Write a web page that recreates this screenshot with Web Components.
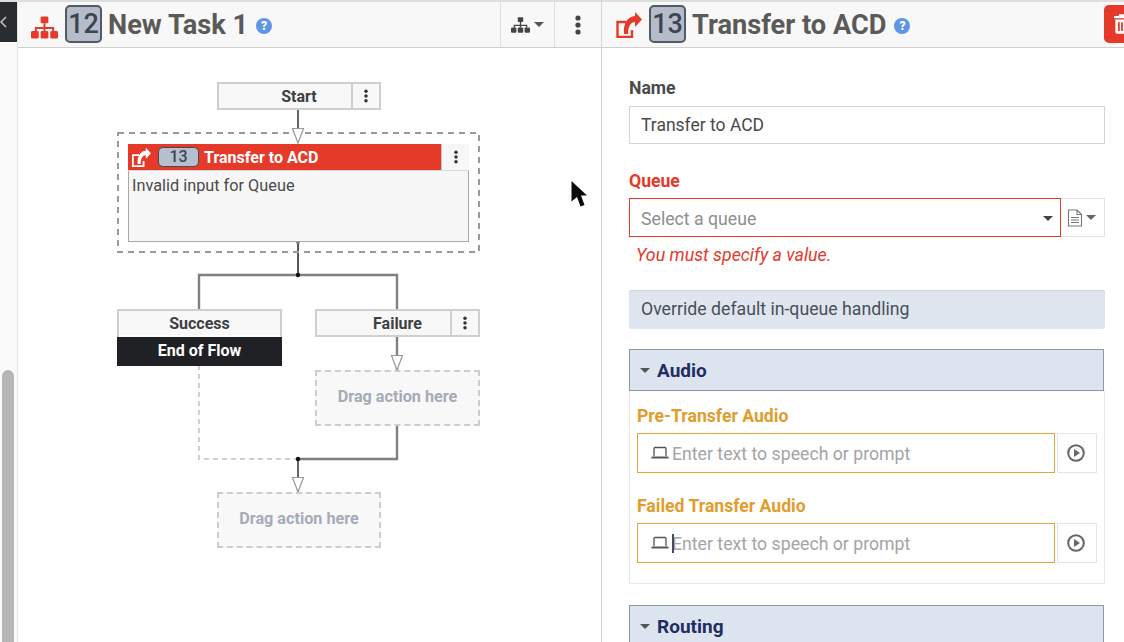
<!DOCTYPE html>
<html>
<head>
<meta charset="utf-8">
<title>Task editor</title>
<style>
    html, body { margin: 0; height: 100%; overflow: hidden; background: #fff; }
    body { font-family: Roboto, "Liberation Sans", sans-serif; }
</style>
</head>
<body>

<editor-shell>
    <side-rail slot="rail"></side-rail>

    <task-panel slot="flow" class="flow">
        <task-header number="12" label="New Task 1" icon="tree" actions></task-header>
        <flow-canvas></flow-canvas>
    </task-panel>

    <task-panel slot="props">
        <task-header number="13" label="Transfer to ACD" icon="share" trash></task-header>
        <props-form></props-form>
    </task-panel>
</editor-shell>
<mouse-pointer></mouse-pointer>

<script>
const ICONS = {
    tree: `<rect x="10" y="0" width="8" height="7" rx="1"/><path d="M13 7h2v4h9v4h-2v-2h-7v2h-2v-2H6v2H4v-4h9z"/><rect x="0" y="15" width="8" height="8" rx="1.5"/><rect x="10" y="15" width="8" height="8" rx="1.5"/><rect x="20" y="15" width="8" height="8" rx="1.5"/>`,
    share: `<path d="M11 11H2.500v15H17v-7" fill="none" stroke="currentColor" stroke-width="2.400"/><path d="M9 23C8 12 13 5.500 20 5V1l7 7.500L20 16v-5c-4 0-7 4-7 12z"/>`,
    kebab: `<circle cx="3" cy="3" r="2.600"/><circle cx="3" cy="10" r="2.600"/><circle cx="3" cy="17" r="2.600"/>`
};

function icon(name, w, h, box) {
    return `<svg width="${w}" height="${h}" viewBox="${box}" fill="currentColor" aria-hidden="true">${ICONS[name]}</svg>`;
}

class EditorShell extends HTMLElement {
    constructor() {
        super();
        this.attachShadow({ mode: 'open' });
    }

    connectedCallback() {
        this.shadowRoot.innerHTML = `
            <style>
                :host {
                    display: grid;
                    grid-template-columns: 17px 585px 522px;
                    height: 642px;
                    overflow: hidden;
                    color: #444;
                }
            </style>
            <slot name="rail"></slot>
            <slot name="flow"></slot>
            <slot name="props"></slot>
        `;
    }
}

class SideRail extends HTMLElement {
    constructor() {
        super();
        this.attachShadow({ mode: 'open' });
    }

    connectedCallback() {
        this.shadowRoot.innerHTML = `
            <style>
                :host {
                    display: flex;
                    flex-direction: column;
                    justify-content: space-between;
                    background: #fafafa;
                    border-top: 2px solid #dedede;
                    box-sizing: border-box;
                    height: 642px;
                }

                .back {
                    height: 40px;
                    background: #2a2d30;
                    color: #c4c6c8;
                    display: flex;
                    align-items: center;
                }

                .thumb {
                    width: 12px;
                    height: 272px;
                    margin-left: 2px;
                    background: #b6b6b6;
                    border-radius: 6px 6px 0 0;
                }
            </style>
            <div class="back">
                <svg width="8" height="14" viewBox="0 0 8 14" fill="none" stroke="currentColor" stroke-width="1.500"><path d="M6 2 1 7l5 5"/></svg>
            </div>
            <div class="thumb"></div>
        `;
    }
}

class TaskPanel extends HTMLElement {
    constructor() {
        super();
        this.attachShadow({ mode: 'open' });
    }

    connectedCallback() {
        this.shadowRoot.innerHTML = `
            <style>
                :host {
                    display: flex;
                    flex-direction: column;
                    height: 642px;
                    min-width: 0;
                    overflow: hidden;
                    box-sizing: border-box;
                }

                :host(.flow) {
                    border-left: 1px solid #e4e4e4;
                    border-right: 1px solid #d6d6d6;
                }
            </style>
            <slot></slot>
        `;
    }
}

class TaskHeader extends HTMLElement {
    constructor() {
        super();
        this.attachShadow({ mode: 'open' });
    }

    connectedCallback() {
        const isTree = this.getAttribute('icon') === 'tree';
        const main = isTree ? icon('tree', 27, 23, '0 0 28 23') : icon('share', 27, 27, '0 0 27 27');
        this.shadowRoot.innerHTML = `
            <style>
                :host {
                    display: flex;
                    align-items: stretch;
                    flex: none;
                    height: 48px;
                    box-sizing: border-box;
                    background: #f8f8f8;
                    border-top: 2px solid #dedede;
                    border-bottom: 1px solid #cfcfcf;
                }

                .title {
                    display: flex;
                    align-items: center;
                    flex: 1;
                    padding-left: 13px;
                    min-width: 0;
                }

                .main {
                    display: flex;
                    color: #e5392a;
                    margin-right: 7px;
                }

                .main.tree {
                    margin-top: 5px;
                }

                .badge {
                    box-sizing: border-box;
                    width: 37px;
                    height: 38px;
                    margin-top: -2px;
                    margin-right: 6px;
                    background: #b6bdca;
                    border: 2px solid #555a60;
                    border-radius: 5px;
                    color: #3c4552;
                    font-size: 27px;
                    font-weight: 500;
                    line-height: 34px;
                    text-align: center;
                }

                .label {
                    font-size: 27.200px;
                    font-weight: 700;
                    color: #5a5a58;
                    white-space: nowrap;
                }

                .help {
                    width: 16px;
                    height: 16px;
                    margin-left: 8px;
                    margin-top: 2px;
                    border-radius: 50%;
                    background: #5f95e6;
                    color: #fff;
                    font-size: 12px;
                    font-weight: 900;
                    line-height: 16px;
                    text-align: center;
                }

                .cell {
                    box-sizing: border-box;
                    display: flex;
                    align-items: center;
                    justify-content: center;
                    gap: 4px;
                    width: 54px;
                    border-left: 1px solid #dedede;
                    color: #444;
                }

                .cell.kebab {
                    width: 47px;
                }

                .caret {
                    width: 0;
                    height: 0;
                    border: 5px solid transparent;
                    border-top-color: #555;
                    border-bottom: 0;
                }

                .trash {
                    box-sizing: border-box;
                    flex: none;
                    width: 40px;
                    height: 38px;
                    margin: 3px -20px 0 0;
                    background: #e5392a;
                    border-radius: 5px;
                    color: #fff;
                    padding: 9px 0 0 10px;
                }
            </style>
            <div class="title">
                <span class="main ${isTree ? 'tree' : ''}">${main}</span>
                <span class="badge">${this.getAttribute('number')}</span>
                <span class="label">${this.getAttribute('label')}</span>
                <span class="help">?</span>
            </div>
            ${this.hasAttribute('actions') ? `
                <div class="cell">
                    ${icon('tree', 19, 16, '0 0 28 23')}
                    <span class="caret"></span>
                </div>
                <div class="cell kebab">${icon('kebab', 6, 20, '0 0 6 20')}</div>
            ` : ''}
            ${this.hasAttribute('trash') ? `
                <div class="trash">
                    <svg width="16" height="20" viewBox="0 0 18 22" fill="currentColor"><path d="M6 0h6l1 2h5v2.500H0V2h5zM1.500 6h15v14a2 2 0 0 1-2 2h-11a2 2 0 0 1-2-2zm3 3v10h2V9zm3.500 0v10h2V9zm3.500 0v10h2V9z"/></svg>
                </div>
            ` : ''}
        `;
    }
}

// nodes of the diagram sit at their own place on the canvas
class FlowNode extends HTMLElement {
    constructor() {
        super();
        this.attachShadow({ mode: 'open' });
    }

    connectedCallback() {
        const hasMenu = this.hasAttribute('menu');
        this.shadowRoot.innerHTML = `
            <style>
                :host {
                    position: absolute;
                    display: block;
                    box-sizing: border-box;
                    width: 165px;
                    background: #fff;
                    border: 2px solid #cfcfcf;
                    color: #3d3f43;
                    font-size: 16px;
                    font-weight: 700;
                }

                .row {
                    position: relative;
                    height: 24px;
                    background: #f8f8f8;
                }

                .name {
                    text-align: center;
                    line-height: 25px;
                }

                .menu {
                    position: absolute;
                    right: 0;
                    top: 0;
                    bottom: 0;
                    width: 26px;
                    border-left: 2px solid #cfcfcf;
                    display: flex;
                    align-items: center;
                    justify-content: center;
                    color: #333;
                }

                .end {
                    margin: 2px -2px -2px;
                    height: 29px;
                    background: #202124;
                    color: #fff;
                    text-align: center;
                    line-height: 27px;
                }
            </style>
            <div class="row">
                <div class="name">${this.getAttribute('label')}</div>
                ${hasMenu ? `<div class="menu">${icon('kebab', 4, 14, '0 0 6 20')}</div>` : ''}
            </div>
            ${this.hasAttribute('end') ? `<div class="end">${this.getAttribute('end')}</div>` : ''}
        `;
    }
}

class DropZone extends HTMLElement {
    constructor() {
        super();
        this.attachShadow({ mode: 'open' });
    }

    connectedCallback() {
        this.shadowRoot.innerHTML = `
            <style>
                :host {
                    position: absolute;
                    display: flex;
                    align-items: center;
                    justify-content: center;
                    box-sizing: border-box;
                    width: 165px;
                    height: 56px;
                    padding-bottom: 3px;
                    background: #f8f8f8;
                    border: 2px dashed #cdcdcd;
                    color: #a5abb7;
                    font-size: 16.200px;
                    font-weight: 700;
                }
            </style>
            <slot></slot>
        `;
    }
}

class ActionNode extends HTMLElement {
    constructor() {
        super();
        this.attachShadow({ mode: 'open' });
    }

    connectedCallback() {
        this.shadowRoot.innerHTML = `
            <style>
                :host {
                    position: absolute;
                    display: block;
                    box-sizing: border-box;
                    width: 341px;
                    height: 98px;
                    background: #f7f7f7;
                    border: 1px solid #a8a8a8;
                    font-size: 16.300px;
                    color: #4a4a4a;
                }

                .bar {
                    display: flex;
                    align-items: center;
                    height: 26px;
                    margin: -1px -1px 0;
                    background: #e5392a;
                    color: #fff;
                    font-weight: 700;
                    font-size: 16px;
                    border-bottom: 1px solid #d9d9d9;
                }

                .share {
                    display: flex;
                    margin: 0 7px 0 3px;
                }

                .num {
                    box-sizing: border-box;
                    width: 41px;
                    height: 20px;
                    margin-right: 5px;
                    background: #b6bfcd;
                    border: 1px solid #4a4a4a;
                    border-radius: 5px;
                    color: #3d4450;
                    font-weight: 500;
                    line-height: 18px;
                    text-align: center;
                }

                .name {
                    flex: 1;
                }

                .menu {
                    width: 27px;
                    height: 100%;
                    background: #f7f7f7;
                    border-left: 1px solid #c8c8c8;
                    display: flex;
                    align-items: center;
                    justify-content: center;
                    color: #333;
                }

                .body {
                    padding: 5px 3px;
                }
            </style>
            <div class="bar">
                <span class="share">${icon('share', 20, 20, '0 0 27 27')}</span>
                <span class="num">13</span>
                <span class="name">Transfer to ACD</span>
                <span class="menu">${icon('kebab', 4, 14, '0 0 6 20')}</span>
            </div>
            <div class="body">Invalid input for Queue</div>
        `;
    }
}

class FlowCanvas extends HTMLElement {
    constructor() {
        super();
        this.attachShadow({ mode: 'open' });
    }

    connectedCallback() {
        this.shadowRoot.innerHTML = `
            <style>
                :host {
                    display: block;
                    position: relative;
                    flex: 1;
                    background: #fff;
                }

                svg {
                    position: absolute;
                    left: 0;
                    top: 0;
                }
            </style>
            <svg width="584" height="594" fill="none">
                <path d="M280 62V84" stroke="#333" stroke-width="1.500"/>
                <path d="M280 194V227" stroke="#222" stroke-width="1.500"/>
                <path d="M181 261V227H379V261" stroke="#808080" stroke-width="2.400"/>
                <path d="M379 289V322" stroke="#808080" stroke-width="2.400"/>
                <path d="M181 317V411H280" stroke="#cfcfcf" stroke-width="2" stroke-dasharray="5 4"/>
                <path d="M379 378V411H280" stroke="#808080" stroke-width="2.400"/>
                <path d="M280 411V444" stroke="#333" stroke-width="1.500"/>
                <circle cx="280" cy="227" r="2.200" fill="#111"/>
                <circle cx="280" cy="411" r="2.200" fill="#111"/>
                <circle cx="280" cy="194" r="2" fill="#777"/>
                <rect x="100" y="85" width="361" height="119" stroke="#9a9a9a" stroke-width="2" stroke-dasharray="6 5"/>
            </svg>
            <flow-node label="Start" menu style="left:199px;top:34px;width:164px;height:28px"></flow-node>
            <svg width="584" height="594" fill="#fff" stroke="#999" stroke-width="1.200" style="pointer-events:none">
                <path d="M274.500 80.500H285.500L280 95z"/>
                <path d="M373.500 307.500H384.500L379 322z"/>
                <path d="M274.500 429.500H285.500L280 444z"/>
            </svg>
            <action-node style="left:110px;top:96px"></action-node>
            <flow-node label="Success" end="End of Flow" style="left:99px;top:261px;height:56px"></flow-node>
            <flow-node label="Failure" menu style="left:297px;top:261px;height:28px"></flow-node>
            <drop-zone style="left:297px;top:322px">Drag action here</drop-zone>
            <drop-zone style="left:199px;top:444px;width:164px">Drag action here</drop-zone>
        `;
    }
}

class FieldLabel extends HTMLElement {
    constructor() {
        super();
        this.attachShadow({ mode: 'open' });
    }

    connectedCallback() {
        this.shadowRoot.innerHTML = `
            <style>
                :host {
                    display: block;
                    font-size: 17.600px;
                    font-weight: 700;
                    line-height: 18px;
                    color: #4a4a4a;
                }

                :host([tone="error"]) { color: #e5392a; }
                :host([tone="warn"]) { color: #df9d2e; }
            </style>
            <slot></slot>
        `;
    }
}

class AudioInput extends HTMLElement {
    constructor() {
        super();
        this.attachShadow({ mode: 'open' });
    }

    connectedCallback() {
        this.shadowRoot.innerHTML = `
            <style>
                :host {
                    display: flex;
                    height: 40px;
                    margin-top: 8px;
                }

                .box {
                    box-sizing: border-box;
                    width: 418px;
                    display: flex;
                    align-items: center;
                    padding-left: 13px;
                    gap: 3px;
                    border: 1.500px solid #dfa53c;
                    color: #a4a4a4;
                    font-size: 17.700px;
                    position: relative;
                }

                .laptop {
                    display: flex;
                    color: #555;
                }

                .text {
                    position: relative;
                    top: 1px;
                }

                .caret {
                    position: absolute;
                    left: 34px;
                    top: 10px;
                    width: 1.500px;
                    height: 19px;
                    background: #444c58;
                }

                .play {
                    box-sizing: border-box;
                    width: 40px;
                    margin-left: 2px;
                    padding-right: 2px;
                    border: 1px solid #e4e4e4;
                    display: flex;
                    align-items: center;
                    justify-content: center;
                    color: #666;
                }
            </style>
            <div class="box">
                <span class="laptop">
                    <svg width="18" height="14" viewBox="0 0 18 14" fill="none" stroke="currentColor" stroke-width="1.300"><path d="M3 10V2.500a1 1 0 0 1 1-1h10a1 1 0 0 1 1 1V10"/><path d="M.500 11.500h17" stroke-width="2"/></svg>
                </span>
                <span class="text">Enter text to speech or prompt</span>
                ${this.hasAttribute('focused') ? '<span class="caret"></span>' : ''}
            </div>
            <div class="play">
                <svg width="18" height="18" viewBox="0 0 18 18"><circle cx="9" cy="9" r="7.800" fill="none" stroke="currentColor" stroke-width="2"/><path d="M7 5l6 4-6 4z" fill="currentColor"/></svg>
            </div>
        `;
    }
}

class SectionHead extends HTMLElement {
    constructor() {
        super();
        this.attachShadow({ mode: 'open' });
    }

    connectedCallback() {
        this.shadowRoot.innerHTML = `
            <style>
                :host {
                    display: flex;
                    align-items: center;
                    box-sizing: border-box;
                    flex: none;
                    height: 42px;
                    width: 475px;
                    padding: 1px 0 0 10px;
                    gap: 7px;
                    background: #dce4f0;
                    border: 1px solid #8f97a3;
                    color: #1f2d62;
                    font-size: 19px;
                    font-weight: 700;
                }

                .caret {
                    width: 0;
                    height: 0;
                    border: 5px solid transparent;
                    border-top-color: #555;
                    border-bottom: 0;
                }
            </style>
            <span class="caret"></span>
            <slot></slot>
        `;
    }
}

class PropsForm extends HTMLElement {
    constructor() {
        super();
        this.attachShadow({ mode: 'open' });
    }

    connectedCallback() {
        this.shadowRoot.innerHTML = `
            <style>
                :host {
                    display: block;
                    flex: 1;
                    padding: 31px 19px 0 27px;
                    background: #fff;
                    overflow: hidden;
                }

                .input {
                    box-sizing: border-box;
                    display: flex;
                    align-items: center;
                    height: 38px;
                    margin-top: 9px;
                    padding: 0 0 1px 11px;
                    border: 1px solid #d5d5d5;
                    font-size: 17.500px;
                    color: #4a4a4a;
                }

                .queue {
                    margin-top: 28px;
                }

                .select-row {
                    display: flex;
                    height: 39px;
                    margin-top: 8px;
                }

                .select {
                    box-sizing: border-box;
                    flex: 1;
                    display: flex;
                    align-items: center;
                    justify-content: space-between;
                    padding: 2px 7px 0 11px;
                    border: 1px solid #e5392a;
                    color: #8e8e8e;
                    font-size: 17.700px;
                }

                .caret {
                    width: 0;
                    height: 0;
                    border: 5px solid transparent;
                    border-top-color: #444;
                    border-bottom: 0;
                }

                .doc {
                    box-sizing: border-box;
                    width: 44px;
                    display: flex;
                    align-items: center;
                    justify-content: center;
                    gap: 3px;
                    padding-right: 3px;
                    border: 1px solid #e2e2e2;
                    border-left: 0;
                    color: #777;
                }

                .doc .caret {
                    border-top-color: #666;
                }

                .error {
                    margin: 9px 0 0 7px;
                    line-height: 18px;
                    color: #e5392a;
                    font-size: 17.800px;
                    font-style: italic;
                }

                .override {
                    box-sizing: border-box;
                    height: 39px;
                    margin-top: 26px;
                    padding: 0 0 2px 12px;
                    display: flex;
                    align-items: center;
                    background: #dfe6ef;
                    border-radius: 2px;
                    box-shadow: inset 0 1px 1px #cdd3db;
                    color: #4a4f57;
                    font-size: 17.700px;
                }

                .section {
                    margin-top: 20px;
                }

                .section-body {
                    box-sizing: border-box;
                    height: 193px;
                    padding: 16px 7px 0;
                    border: 1px solid #e8e8e8;
                    border-top: 0;
                }

                .gap {
                    margin-top: 24px;
                }

                .routing {
                    margin-top: 21px;
                }
            </style>
            <field-label>Name</field-label>
            <div class="input">Transfer to ACD</div>

            <field-label class="queue" tone="error">Queue</field-label>
            <div class="select-row">
                <div class="select"><span>Select a queue</span><span class="caret"></span></div>
                <div class="doc">
                    <svg width="16" height="18" viewBox="0 0 16 18" fill="none" stroke="currentColor" stroke-width="1.100"><path d="M1.500 1h8.500l4.500 4.500V17h-13zM10 1v4.500h4.500M4 8.500h8M4 11h8M4 13.500h8"/></svg>
                    <span class="caret"></span>
                </div>
            </div>
            <div class="error">You must specify a value.</div>

            <div class="override">Override default in-queue handling</div>

            <div class="section">
                <section-head>Audio</section-head>
                <div class="section-body">
                    <field-label tone="warn">Pre-Transfer Audio</field-label>
                    <audio-input></audio-input>
                    <field-label class="gap" tone="warn">Failed Transfer Audio</field-label>
                    <audio-input focused></audio-input>
                </div>
            </div>

            <div class="routing">
                <section-head>Routing</section-head>
            </div>
        `;
    }
}

class MousePointer extends HTMLElement {
    constructor() {
        super();
        this.attachShadow({ mode: 'open' });
    }

    connectedCallback() {
        this.shadowRoot.innerHTML = `
            <style>
                :host {
                    position: absolute;
                    left: 570px;
                    top: 180px;
                    display: block;
                    width: 18px;
                    height: 27px;
                }
            </style>
            <svg width="18" height="27" viewBox="0 0 18 27"><path d="M1.500 1 17 15.500h-6L14.500 25l-4 1.500L7 17l-5.500 4.500z" fill="#0b0b0b"/></svg>
        `;
    }
}

customElements.define('editor-shell', EditorShell);
customElements.define('side-rail', SideRail);
customElements.define('task-panel', TaskPanel);
customElements.define('task-header', TaskHeader);
customElements.define('flow-node', FlowNode);
customElements.define('drop-zone', DropZone);
customElements.define('action-node', ActionNode);
customElements.define('flow-canvas', FlowCanvas);
customElements.define('field-label', FieldLabel);
customElements.define('audio-input', AudioInput);
customElements.define('section-head', SectionHead);
customElements.define('props-form', PropsForm);
customElements.define('mouse-pointer', MousePointer);
</script>
</body>
</html>
